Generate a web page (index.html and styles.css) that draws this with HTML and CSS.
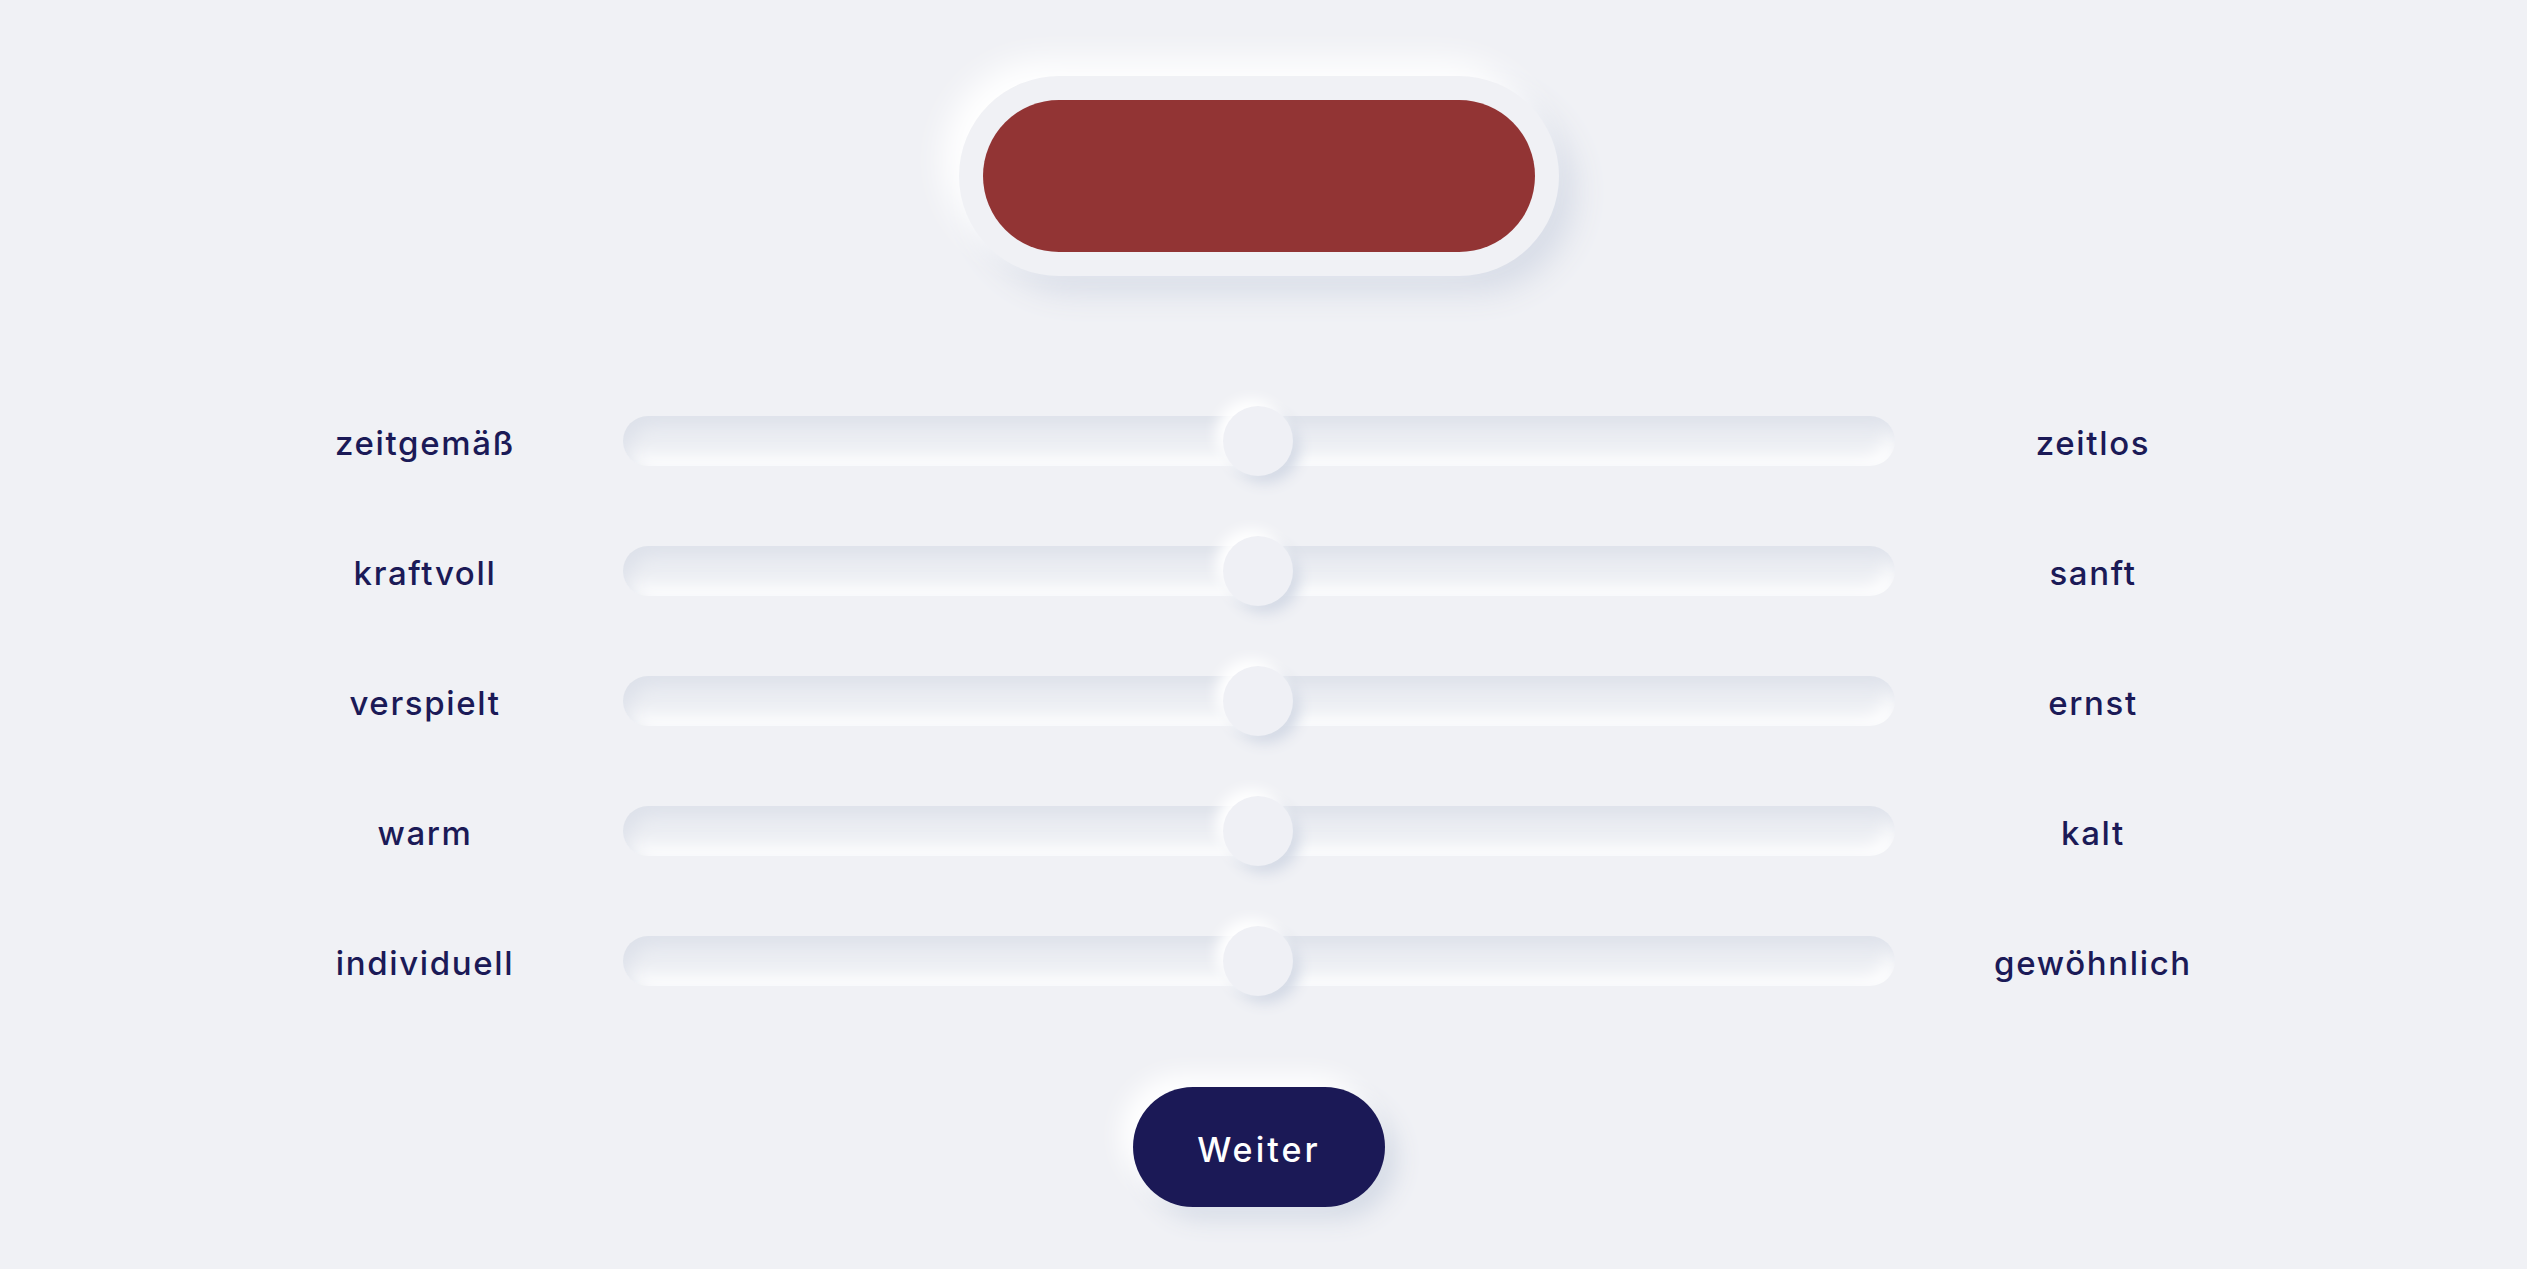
FILE: index.html
```html
<!DOCTYPE html>
<html lang="de">
<head>
<meta charset="utf-8">
<title>Markencharakter</title>
<link rel="stylesheet" href="styles.css">
</head>
<body>
<main class="page">
  <div class="swatch-frame"><div class="swatch"></div></div>
  <div class="scales">
    <span class="label">zeitgemäß</span>
    <div class="track"><span class="thumb"></span></div>
    <span class="label">zeitlos</span>

    <span class="label">kraftvoll</span>
    <div class="track"><span class="thumb"></span></div>
    <span class="label">sanft</span>

    <span class="label">verspielt</span>
    <div class="track"><span class="thumb"></span></div>
    <span class="label">ernst</span>

    <span class="label">warm</span>
    <div class="track"><span class="thumb"></span></div>
    <span class="label">kalt</span>

    <span class="label">individuell</span>
    <div class="track"><span class="thumb"></span></div>
    <span class="label">gewöhnlich</span>
  </div>
  <button class="next" type="button">Weiter</button>
</main>
</body>
</html>
```
FILE: styles.css
```css
html, body {
  margin: 0;
  background: #f0f1f5;
}
body {
  font-family: Inter, "Open Sans", "Liberation Sans", sans-serif;
  color: #1b1a57;
}
.page {
  display: flex;
  flex-direction: column;
  align-items: center;
  padding: 76px 9px 60px 0;
}
.swatch-frame {
  box-sizing: border-box;
  width: 600px;
  height: 200px;
  padding: 24px;
  border-radius: 100px;
  background: #f0f1f5;
  box-shadow: -16px -16px 32px #ffffff, 16px 16px 32px #d7dce7;
}
.swatch {
  width: 100%;
  height: 100%;
  border-radius: 76px;
  background: #923434;
}
.scales {
  margin-top: 140px;
  display: grid;
  grid-template-columns: 276px 1272px 276px;
  column-gap: 60px;
  row-gap: 80px;
  grid-auto-rows: 50px;
  align-items: center;
}
.label {
  text-align: center;
  font-size: 33px;
  font-weight: 500;
  letter-spacing: 0.05em;
  line-height: 50px;
  padding-top: 4px;
}
.track {
  position: relative;
  height: 50px;
  border-radius: 25px;
  background: #eceef3;
  box-shadow: inset 6px 10px 18px #dde1ea, inset -6px -10px 18px #ffffff;
}
.thumb {
  position: absolute;
  left: calc(50% - 36px);
  top: -10px;
  width: 70px;
  height: 70px;
  border-radius: 50%;
  background: #eff0f5;
  box-shadow: -7px -7px 14px #ffffff, 7px 7px 14px #d3d9e5;
}
.next {
  margin-top: 101px;
  width: 252px;
  height: 120px;
  border: 0;
  border-radius: 60px;
  background: #1b1956;
  color: #ffffff;
  font-family: Inter, "Open Sans", "Liberation Sans", sans-serif;
  font-size: 34px;
  font-weight: 500;
  letter-spacing: 0.09em;
  padding: 4px 0 0;
  box-shadow: -12px -12px 24px #ffffff, 12px 12px 24px #d5dbe6;
}
```
